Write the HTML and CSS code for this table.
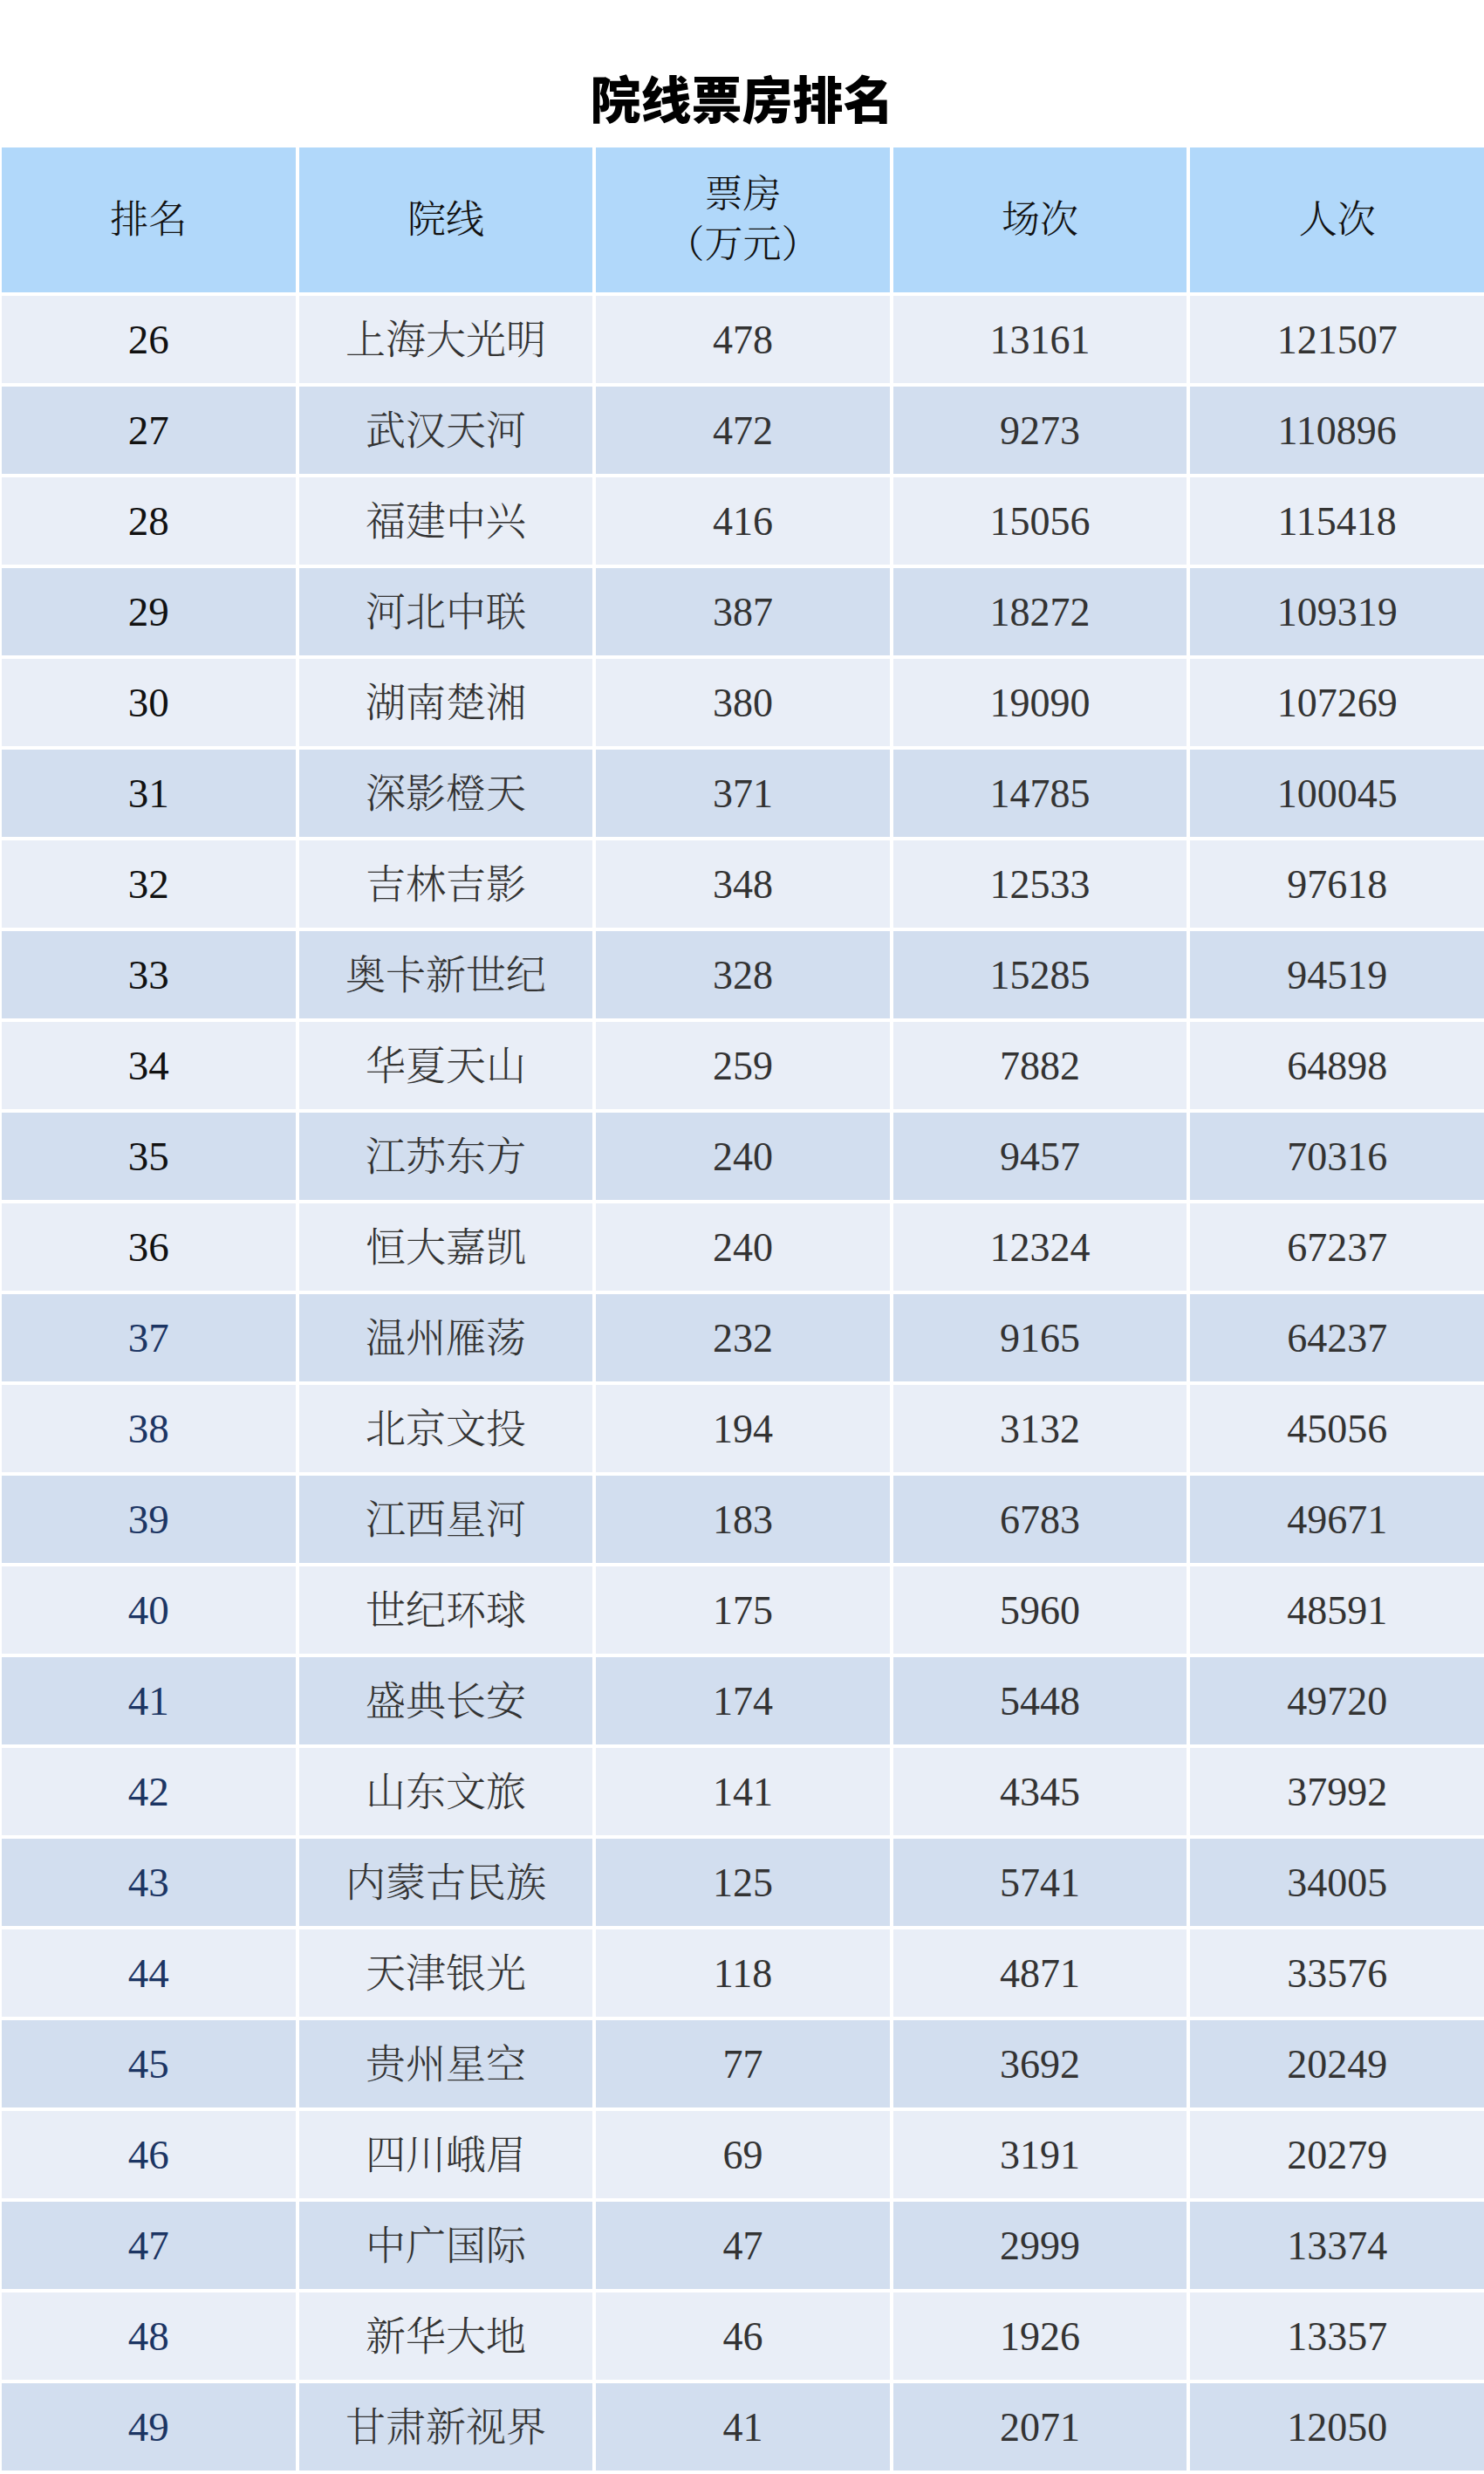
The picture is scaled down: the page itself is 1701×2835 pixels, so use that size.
FILE: index.html
```html
<!DOCTYPE html>
<html lang="zh-CN">
<head>
<meta charset="utf-8">
<title>院线票房排名</title>
<link rel="stylesheet" href="styles.css">
</head>
<body>
<h1 class="title">院线票房排名</h1>
<div class="table">
  <div class="row head">
    <div class="cell">排名</div>
    <div class="cell">院线</div>
    <div class="cell two">票房<br>（万元）</div>
    <div class="cell">场次</div>
    <div class="cell">人次</div>
  </div>
  <div class="row light"><div class="cell rank">26</div><div class="cell">上海大光明</div><div class="cell">478</div><div class="cell">13161</div><div class="cell">121507</div></div>
  <div class="row dark"><div class="cell rank">27</div><div class="cell">武汉天河</div><div class="cell">472</div><div class="cell">9273</div><div class="cell">110896</div></div>
  <div class="row light"><div class="cell rank">28</div><div class="cell">福建中兴</div><div class="cell">416</div><div class="cell">15056</div><div class="cell">115418</div></div>
  <div class="row dark"><div class="cell rank">29</div><div class="cell">河北中联</div><div class="cell">387</div><div class="cell">18272</div><div class="cell">109319</div></div>
  <div class="row light"><div class="cell rank">30</div><div class="cell">湖南楚湘</div><div class="cell">380</div><div class="cell">19090</div><div class="cell">107269</div></div>
  <div class="row dark"><div class="cell rank">31</div><div class="cell">深影橙天</div><div class="cell">371</div><div class="cell">14785</div><div class="cell">100045</div></div>
  <div class="row light"><div class="cell rank">32</div><div class="cell">吉林吉影</div><div class="cell">348</div><div class="cell">12533</div><div class="cell">97618</div></div>
  <div class="row dark"><div class="cell rank">33</div><div class="cell">奥卡新世纪</div><div class="cell">328</div><div class="cell">15285</div><div class="cell">94519</div></div>
  <div class="row light"><div class="cell rank">34</div><div class="cell">华夏天山</div><div class="cell">259</div><div class="cell">7882</div><div class="cell">64898</div></div>
  <div class="row dark"><div class="cell rank">35</div><div class="cell">江苏东方</div><div class="cell">240</div><div class="cell">9457</div><div class="cell">70316</div></div>
  <div class="row light"><div class="cell rank">36</div><div class="cell">恒大嘉凯</div><div class="cell">240</div><div class="cell">12324</div><div class="cell">67237</div></div>
  <div class="row dark"><div class="cell rank navy">37</div><div class="cell">温州雁荡</div><div class="cell">232</div><div class="cell">9165</div><div class="cell">64237</div></div>
  <div class="row light"><div class="cell rank navy">38</div><div class="cell">北京文投</div><div class="cell">194</div><div class="cell">3132</div><div class="cell">45056</div></div>
  <div class="row dark"><div class="cell rank navy">39</div><div class="cell">江西星河</div><div class="cell">183</div><div class="cell">6783</div><div class="cell">49671</div></div>
  <div class="row light"><div class="cell rank navy">40</div><div class="cell">世纪环球</div><div class="cell">175</div><div class="cell">5960</div><div class="cell">48591</div></div>
  <div class="row dark"><div class="cell rank navy">41</div><div class="cell">盛典长安</div><div class="cell">174</div><div class="cell">5448</div><div class="cell">49720</div></div>
  <div class="row light"><div class="cell rank navy">42</div><div class="cell">山东文旅</div><div class="cell">141</div><div class="cell">4345</div><div class="cell">37992</div></div>
  <div class="row dark"><div class="cell rank navy">43</div><div class="cell">内蒙古民族</div><div class="cell">125</div><div class="cell">5741</div><div class="cell">34005</div></div>
  <div class="row light"><div class="cell rank navy">44</div><div class="cell">天津银光</div><div class="cell">118</div><div class="cell">4871</div><div class="cell">33576</div></div>
  <div class="row dark"><div class="cell rank navy">45</div><div class="cell">贵州星空</div><div class="cell">77</div><div class="cell">3692</div><div class="cell">20249</div></div>
  <div class="row light"><div class="cell rank navy">46</div><div class="cell">四川峨眉</div><div class="cell">69</div><div class="cell">3191</div><div class="cell">20279</div></div>
  <div class="row dark"><div class="cell rank navy">47</div><div class="cell">中广国际</div><div class="cell">47</div><div class="cell">2999</div><div class="cell">13374</div></div>
  <div class="row light"><div class="cell rank navy">48</div><div class="cell">新华大地</div><div class="cell">46</div><div class="cell">1926</div><div class="cell">13357</div></div>
  <div class="row dark"><div class="cell rank navy">49</div><div class="cell">甘肃新视界</div><div class="cell">41</div><div class="cell">2071</div><div class="cell">12050</div></div>
</div>
</body>
</html>
```

FILE: styles.css
```css
html, body {
  margin: 0;
  padding: 0;
  background: #ffffff;
}

body {
  width: 1701px;
  font-family: "Liberation Serif", "Noto Serif CJK SC", "Noto Sans CJK SC", serif;
}

.title {
  margin: 0;
  padding-top: 82px;
  height: 58px;
  margin-bottom: 29px;
  font-family: "Noto Sans CJK SC", sans-serif;
  font-weight: 900;
  font-size: 58px;
  line-height: 58px;
  text-align: center;
  color: #000000;
}

.table {
  display: flex;
  flex-direction: column;
  gap: 4px;
  padding-left: 2px;
}

.row {
  display: grid;
  grid-template-columns: repeat(5, 1fr);
  column-gap: 4px;
  height: 100px;
}

.row.head {
  height: 166px;
}

.cell {
  display: flex;
  align-items: center;
  justify-content: center;
  text-align: center;
  font-size: 46px;
  font-weight: 300;
  color: #333333;
  line-height: 57px;
}

.head .cell {
  background: #b1d8fa;
  color: #111111;
  font-size: 44px;
}

.light .cell {
  background: #e9eef7;
}

.dark .cell {
  background: #d2deef;
}

.cell.rank {
  color: #111111;
  font-size: 47px;
}

.cell.rank.navy {
  color: #1c3563;
}
```
